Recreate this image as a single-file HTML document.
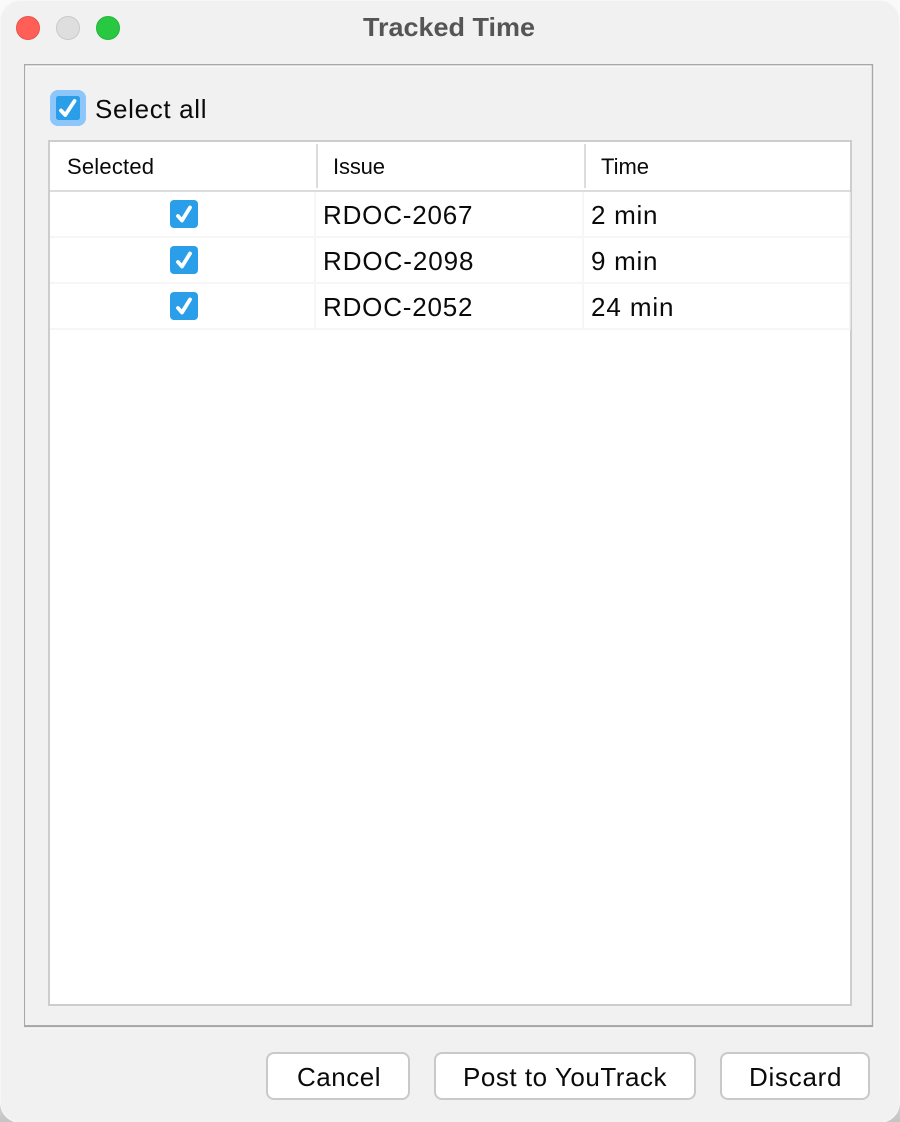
<!DOCTYPE html>
<html><head><meta charset="utf-8"><title>Tracked Time</title>
<style>
html,body{margin:0;padding:0;width:900px;height:1122px;overflow:hidden;background:#fff}
svg{display:block}
text{font-family:"Liberation Sans",sans-serif;fill:#0a0a0a}
</style></head><body>
<svg width="900" height="1122" viewBox="0 0 900 1122" xmlns="http://www.w3.org/2000/svg">
<defs><linearGradient id="bg" x1="0" y1="0" x2="0" y2="1"><stop offset="0" stop-color="#fafafa"/><stop offset="0.95" stop-color="#f0f0f0"/><stop offset="1" stop-color="#c4c4c4"/></linearGradient></defs>
<rect width="900" height="1122" fill="url(#bg)"/>
<rect x="0.5" y="0.5" width="899" height="1122" rx="20" fill="#f1f1f1" stroke="#f7f7f7" stroke-width="1"/>
<circle cx="28" cy="28" r="11.5" fill="#ff5f57" stroke="#e9524a" stroke-width="1"/>
<circle cx="68" cy="28" r="11.5" fill="#dedede" stroke="#c9c9c9" stroke-width="1"/>
<circle cx="108" cy="28" r="11.5" fill="#28c840" stroke="#23b53a" stroke-width="1"/>
<text x="363" y="36" font-size="26" font-weight="700" style="fill:#555555" textLength="172" lengthAdjust="spacingAndGlyphs">Tracked Time</text>

<!-- group frame -->
<rect x="24" y="64" width="850.5" height="964.5" fill="#fafafa"/>
<rect x="24" y="64" width="849.3" height="963.2" fill="#a9a9a9"/>
<rect x="25.2" y="65.4" width="846.5" height="959.6" fill="#fafafa"/>
<rect x="26.4" y="67" width="845.3" height="958" fill="#f1f1f1"/>

<!-- select all -->
<rect x="50" y="90" width="36" height="36" rx="8" fill="#8cc6fb"/>
<rect x="56" y="96" width="24" height="24" rx="2.5" fill="#2a9ee9"/>
<path d="M61 110.5L65.3 115L74.5 101" fill="none" stroke="#fff" stroke-width="3.8" stroke-linecap="round" stroke-linejoin="round"/>
<text x="95" y="118" font-size="26" textLength="111.5">Select all</text>

<!-- table -->
<rect x="49" y="141" width="802" height="864" fill="#fff" stroke="#cdcdcd" stroke-width="2"/>
<rect x="50" y="190" width="800" height="2" fill="#dcdcdc"/>
<rect x="316" y="144" width="2" height="44" fill="#dcdcdc"/>
<rect x="584" y="144" width="2" height="44" fill="#dcdcdc"/>
<text x="67" y="174" font-size="22" textLength="87">Selected</text>
<text x="333" y="174" font-size="22" textLength="52">Issue</text>
<text x="601" y="174" font-size="22" textLength="48">Time</text>

<g fill="#f6f6f6">
<rect x="50" y="236" width="800" height="2"/>
<rect x="50" y="282" width="800" height="2"/>
<rect x="50" y="328" width="800" height="2"/>
<rect x="314" y="192" width="2" height="138"/>
<rect x="582" y="192" width="2" height="138"/>
<rect x="849" y="192" width="1.5" height="138"/>
</g>

<rect x="170" y="200" width="28" height="28" rx="4" fill="#2a9ee9"/>
<path d="M178 216L182 220.5L190 207.5" fill="none" stroke="#fff" stroke-width="3.8" stroke-linecap="round" stroke-linejoin="round"/>
<rect x="170" y="246" width="28" height="28" rx="4" fill="#2a9ee9"/>
<path d="M178 262L182 266.5L190 253.5" fill="none" stroke="#fff" stroke-width="3.8" stroke-linecap="round" stroke-linejoin="round"/>
<rect x="170" y="292" width="28" height="28" rx="4" fill="#2a9ee9"/>
<path d="M178 308L182 312.5L190 299.5" fill="none" stroke="#fff" stroke-width="3.8" stroke-linecap="round" stroke-linejoin="round"/>

<text x="323" y="224" font-size="26" textLength="149.5">RDOC-2067</text>
<text x="323" y="270" font-size="26" textLength="150.5">RDOC-2098</text>
<text x="323" y="316" font-size="26" textLength="149.5">RDOC-2052</text>
<text x="591" y="224" font-size="26" textLength="66.5">2 min</text>
<text x="591" y="270" font-size="26" textLength="66.5">9 min</text>
<text x="591" y="316" font-size="26" textLength="82.5">24 min</text>

<!-- buttons -->
<rect x="267" y="1053" width="142" height="46" rx="7" fill="#fff" stroke="#c9c9c9" stroke-width="2"/>
<rect x="435" y="1053" width="260" height="46" rx="7" fill="#fff" stroke="#c9c9c9" stroke-width="2"/>
<rect x="721" y="1053" width="148" height="46" rx="7" fill="#fff" stroke="#c9c9c9" stroke-width="2"/>
<text x="297" y="1086" font-size="26" textLength="83.5">Cancel</text>
<text x="463" y="1086" font-size="26" textLength="203.5">Post to YouTrack</text>
<text x="749" y="1086" font-size="26" textLength="92.5">Discard</text>
</svg>
</body></html>
